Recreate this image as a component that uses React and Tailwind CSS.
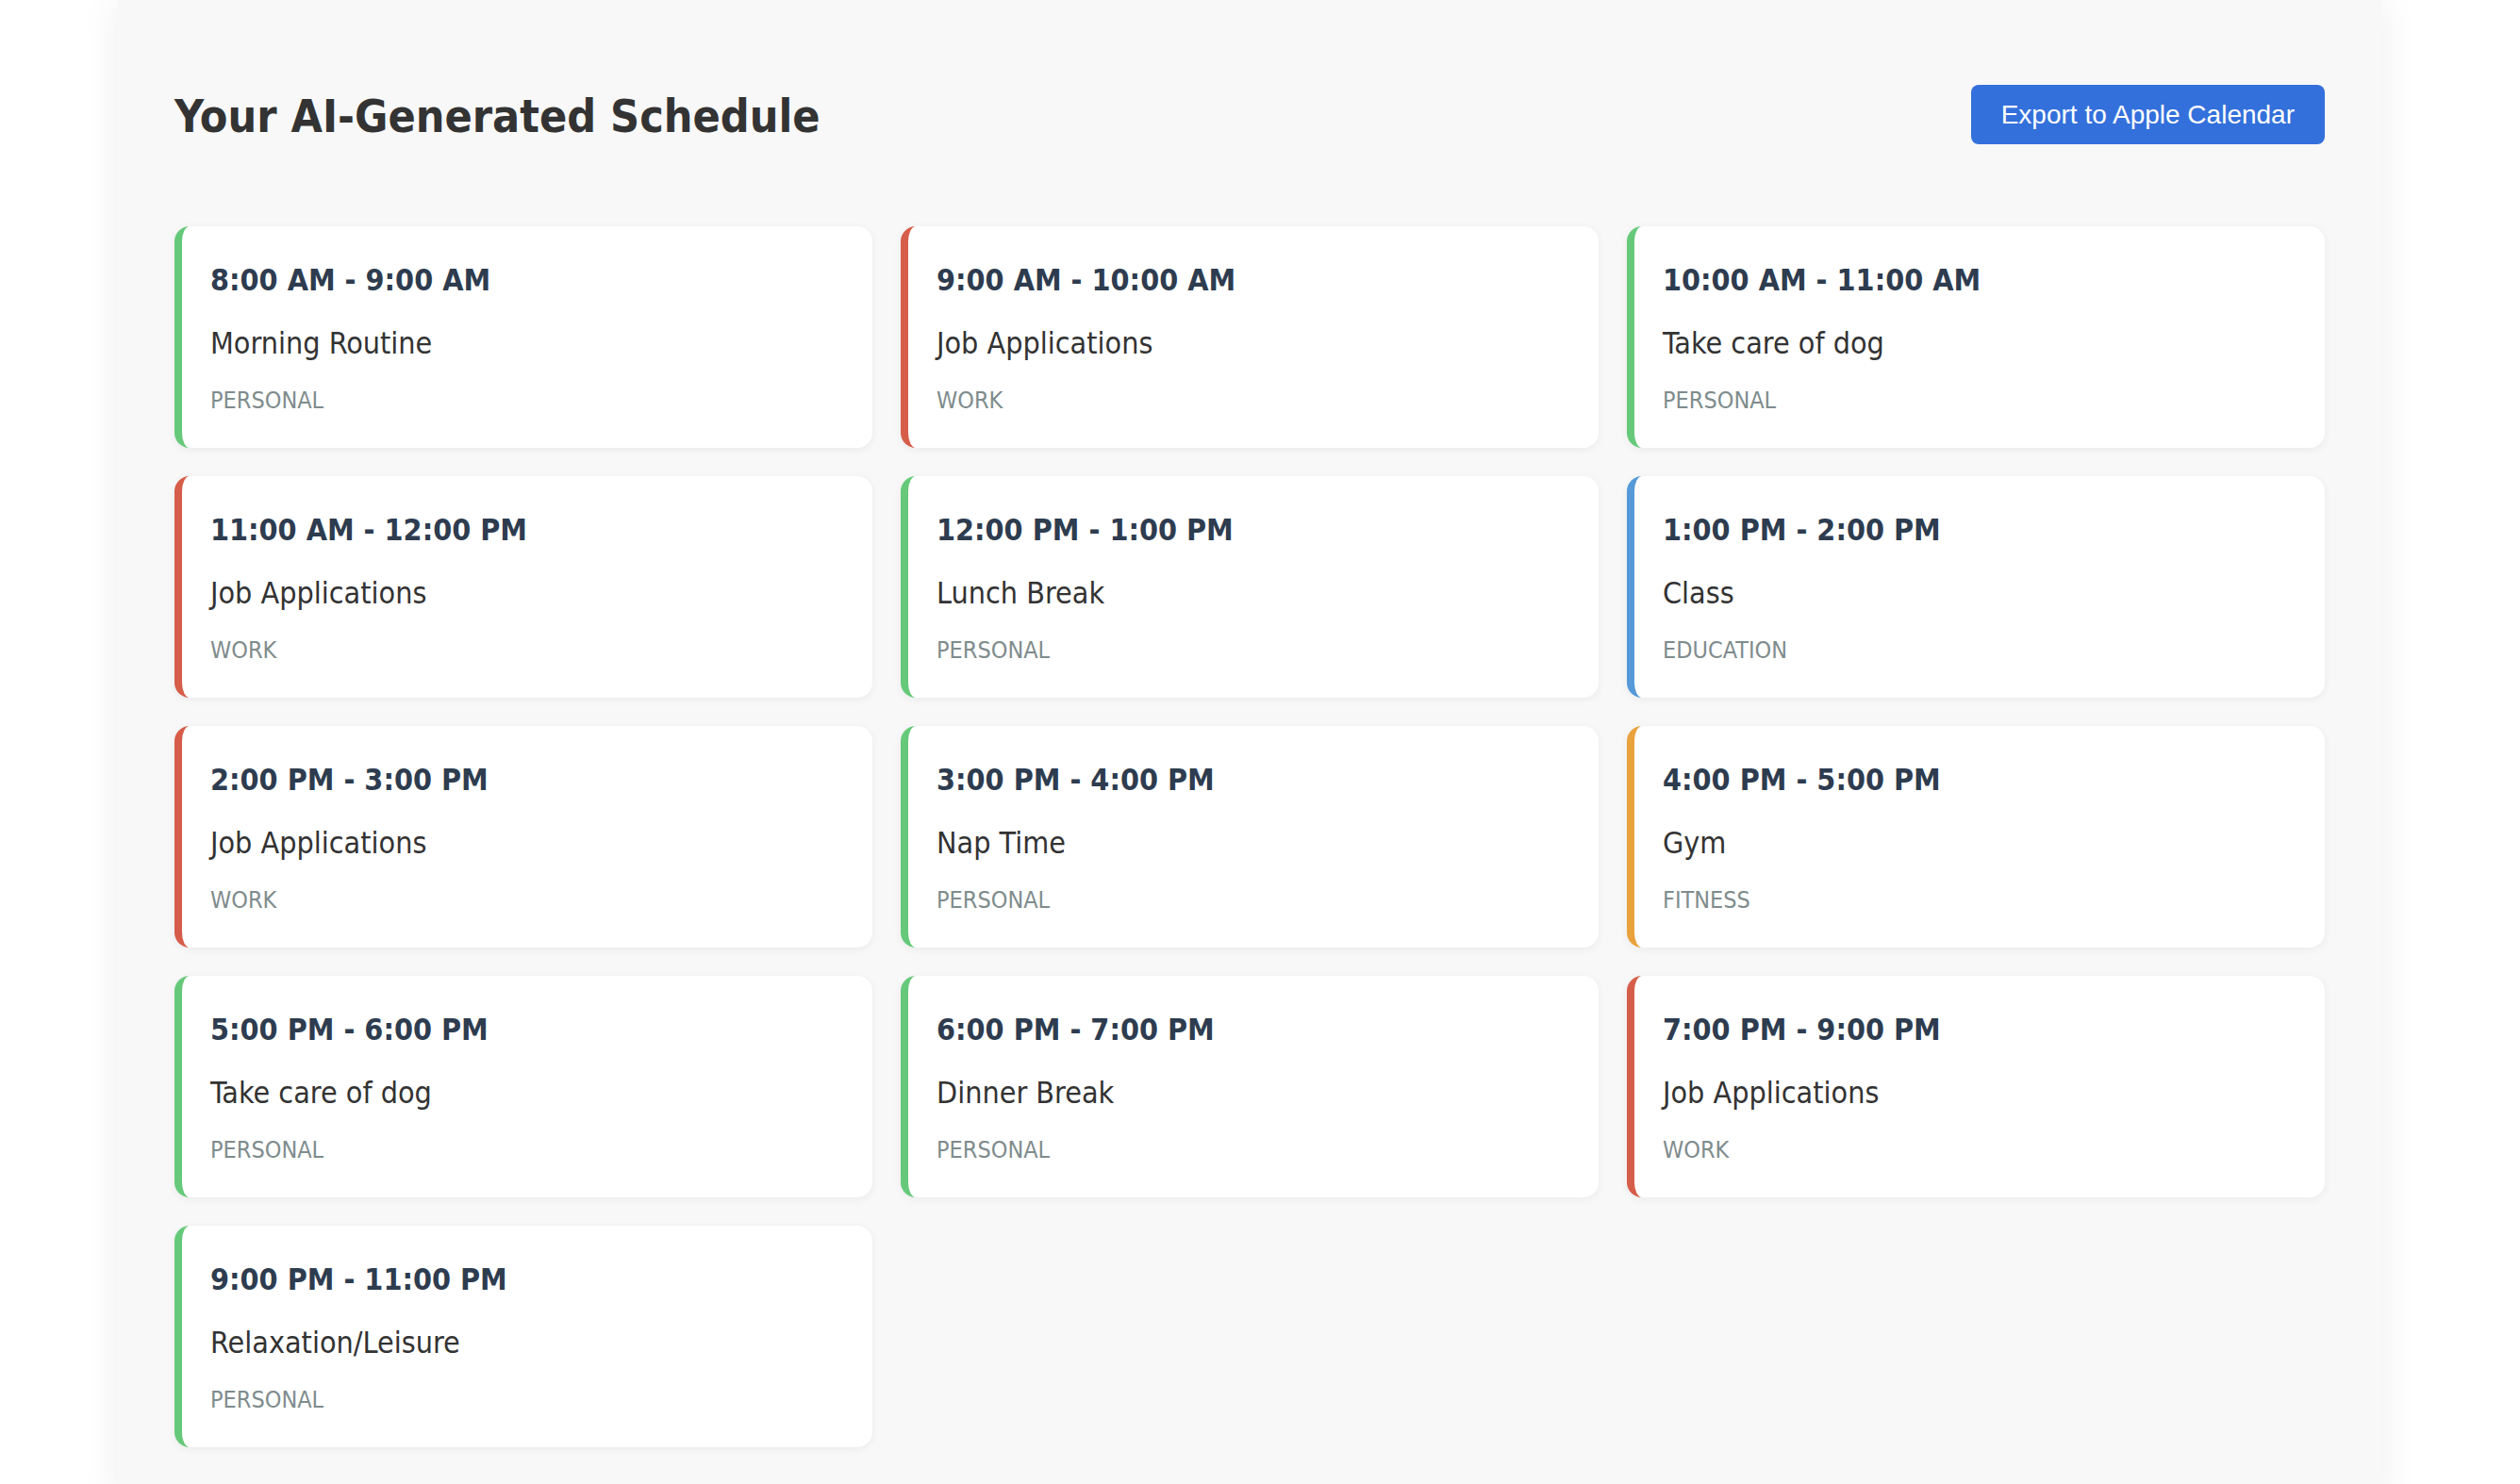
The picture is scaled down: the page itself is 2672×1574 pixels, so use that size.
import React from 'react';

const events = [
  { time: '8:00 AM - 9:00 AM', title: 'Morning Routine', category: 'personal' },
  { time: '9:00 AM - 10:00 AM', title: 'Job Applications', category: 'work' },
  { time: '10:00 AM - 11:00 AM', title: 'Take care of dog', category: 'personal' },
  { time: '11:00 AM - 12:00 PM', title: 'Job Applications', category: 'work' },
  { time: '12:00 PM - 1:00 PM', title: 'Lunch Break', category: 'personal' },
  { time: '1:00 PM - 2:00 PM', title: 'Class', category: 'education' },
  { time: '2:00 PM - 3:00 PM', title: 'Job Applications', category: 'work' },
  { time: '3:00 PM - 4:00 PM', title: 'Nap Time', category: 'personal' },
  { time: '4:00 PM - 5:00 PM', title: 'Gym', category: 'fitness' },
  { time: '5:00 PM - 6:00 PM', title: 'Take care of dog', category: 'personal' },
  { time: '6:00 PM - 7:00 PM', title: 'Dinner Break', category: 'personal' },
  { time: '7:00 PM - 9:00 PM', title: 'Job Applications', category: 'work' },
  { time: '9:00 PM - 11:00 PM', title: 'Relaxation/Leisure', category: 'personal' },
];

// border colour per category
const borderColors = {
  personal: 'border-l-[#66c97a]',
  work: 'border-l-[#d65d49]',
  education: 'border-l-[#5599d9]',
  fitness: 'border-l-[#e9a23c]',
};

const EventCard = ({ event }) => (
  <div
    className={`bg-white rounded-[16px] border-l-[8px] ${borderColors[event.category]} pl-[30px] pr-[30px] pt-[37px] pb-[35px] shadow-[0_2px_10px_rgba(0,0,0,0.06)]`}
  >
    <div className="text-[32px] leading-[40px] font-bold text-[#2e3c4f]">{event.time}</div>
    <div className="mt-[27px] text-[32px] leading-[40px] text-[#333333]">{event.title}</div>
    <div className="mt-[26px] text-[25px] leading-[30px] uppercase text-[#7f8c8d]">{event.category}</div>
  </div>
);

const App = () => {
  return (
    <div className="min-h-screen bg-white" style={{ fontFamily: '"DejaVu Sans Condensed", "DejaVu Sans", sans-serif' }}>
      <div className="ml-[125px] w-[2400px] bg-[#f8f8f8] px-[60px] pt-[90px] pb-[60px] shadow-[0_0_40px_rgba(0,0,0,0.07)]">
        <div className="flex items-center justify-between">
          <h2 className="text-[48px] leading-[60px] font-bold text-[#333333] pt-[2px]">Your AI-Generated Schedule</h2>
          <button
            className="h-[63px] px-[32px] rounded-[8px] bg-[#3370db] text-white text-[28px]"
            style={{ fontFamily: '"Liberation Sans", Arial, sans-serif' }}
          >
            Export to Apple Calendar
          </button>
        </div>

        <div className="mt-[87px] grid grid-cols-3 gap-[30px]">
          {events.map((ev, i) => (
            <EventCard key={i} event={ev} />
          ))}
        </div>
      </div>
    </div>
  );
};

export default App;
